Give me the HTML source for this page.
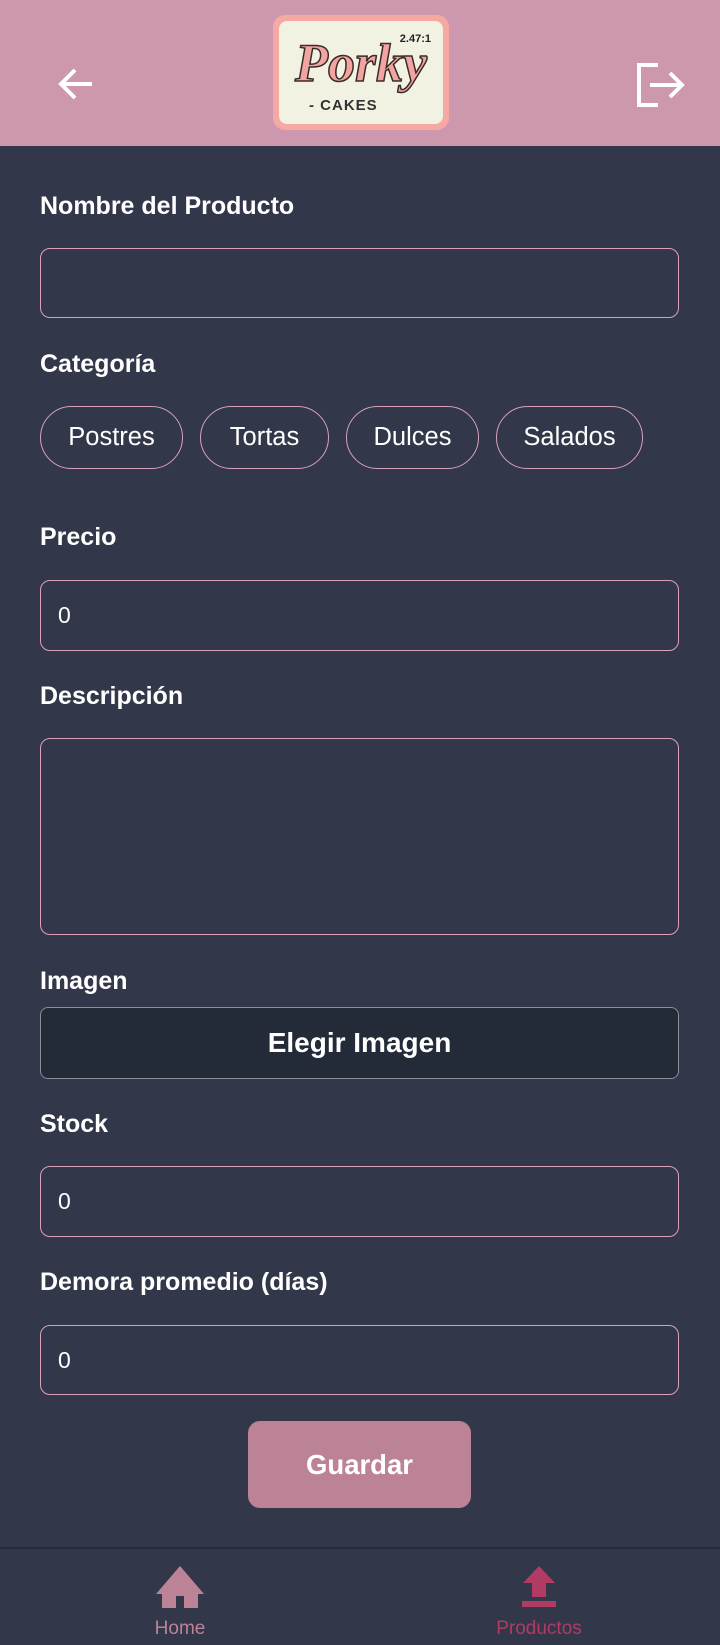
<!DOCTYPE html>
<html><head><meta charset="utf-8"><style>
*{box-sizing:border-box;margin:0;padding:0}
body{width:720px;height:1645px;background:#32374a;font-family:"Liberation Sans",Roboto,sans-serif;color:#fff;position:relative;overflow:hidden}
.hdr{position:absolute;left:0;top:0;width:720px;height:146px;background:#cd97ae}
.abs{position:absolute}
.lbl{position:absolute;left:40px;font-size:25px;font-weight:bold;line-height:28px}
.inp{position:absolute;left:40px;width:639px;border:1.5px solid #d9a2b9;border-radius:10px;font-size:23px;padding-left:17px;display:flex;align-items:center}
.chip{position:absolute;top:406px;height:63px;border:1.5px solid #d9a2b9;border-radius:32px;font-size:25.5px;display:flex;align-items:center;justify-content:center}
</style></head><body>
<div class="hdr"></div>
<svg class="abs" style="left:56px;top:64px" width="40" height="40" viewBox="0 0 40 40"><path d="M36 20H6M19 6L5 20l14 14" stroke="#fff" stroke-width="4" fill="none"/></svg>
<svg class="abs" style="left:636px;top:62px" width="52" height="46" viewBox="0 0 52 46"><path d="M22 3H3v40h19" stroke="#fff" stroke-width="4" fill="none"/><path d="M14 23h32M34 11l12 12-12 12" stroke="#fff" stroke-width="4" fill="none"/></svg>
<div class="abs" style="left:273px;top:15px;width:176px;height:115px;background:#f6a9a3;border-radius:12px;padding:6px">
<div style="width:100%;height:100%;background:#f2f2e2;border-radius:8px;position:relative;text-align:center">
<div style="position:absolute;right:12px;top:12px;font-size:11px;font-weight:bold;color:#222">2.47:1</div>
<div style="position:absolute;left:0;right:0;top:12px;font-size:54px;font-weight:bold;font-family:'Liberation Serif',serif;font-style:italic;color:#f2a5a0;-webkit-text-stroke:1.5px #3a2a2a;line-height:60px">Porky</div>
<div style="position:absolute;left:30px;top:76px;font-size:15px;font-weight:bold;color:#333;letter-spacing:1px">- CAKES</div>
</div></div>

<div class="lbl" style="top:192px">Nombre del Producto</div>
<div class="inp" style="top:248px;height:70px"></div>
<div class="lbl" style="top:350px">Categoría</div>
<div class="chip" style="left:40px;width:143px">Postres</div>
<div class="chip" style="left:200px;width:129px">Tortas</div>
<div class="chip" style="left:346px;width:133px">Dulces</div>
<div class="chip" style="left:496px;width:147px">Salados</div>
<div class="lbl" style="top:523px">Precio</div>
<div class="inp" style="top:580px;height:71px">0</div>
<div class="lbl" style="top:682px">Descripción</div>
<div class="inp" style="top:738px;height:197px"></div>
<div class="lbl" style="top:967px">Imagen</div>
<div class="abs" style="left:40px;top:1007px;width:639px;height:72px;background:#232a38;border:1px solid #8a8f99;border-radius:8px;display:flex;align-items:center;justify-content:center;font-size:28px;font-weight:bold">Elegir Imagen</div>
<div class="lbl" style="top:1110px">Stock</div>
<div class="inp" style="top:1166px;height:71px">0</div>
<div class="lbl" style="top:1268px">Demora promedio (días)</div>
<div class="inp" style="top:1325px;height:70px">0</div>
<div class="abs" style="left:248px;top:1421px;width:223px;height:87px;background:#bc8396;border-radius:12px;display:flex;align-items:center;justify-content:center;font-size:27.5px;font-weight:bold">Guardar</div>
<div class="abs" style="left:0;top:1547px;width:720px;height:2px;background:#262b39"></div>
<svg class="abs" style="left:156px;top:1566px" width="48" height="42" viewBox="0 0 48 42"><path d="M24 0L0 28h6v14h14V30h8v12h14V28h6z" fill="#bc8396"/></svg>
<div class="abs" style="left:120px;top:1618px;width:120px;text-align:center;font-size:19px;color:#bc8396">Home</div>
<svg class="abs" style="left:522px;top:1566px" width="34" height="42" viewBox="0 0 34 42"><path d="M17 0L1 17h9v14h14V17h9z" fill="#b23b64"/><rect x="0" y="35" width="34" height="6" fill="#b23b64"/></svg>
<div class="abs" style="left:469px;top:1618px;width:140px;text-align:center;font-size:19px;color:#b23b64">Productos</div>
</body></html>
